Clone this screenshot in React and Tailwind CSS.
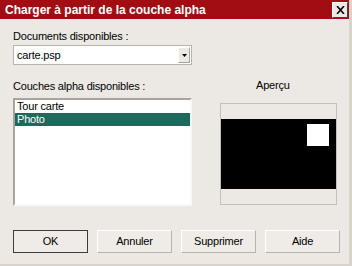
export default function App() {
    const buttons = ['OK', 'Annuler', 'Supprimer', 'Aide'];

    return (
        <div className="w-[352px] h-[266px] bg-[#ece9e4] border-r-[3px] border-b-[2px] border-[#d8d4cc] flex flex-col font-['Liberation_Sans',Arial,sans-serif] text-[11px] tracking-[-0.2px] text-black overflow-hidden">
            {/* Title bar */}
            <div className="h-[19px] shrink-0 bg-[#a10d13] flex items-center justify-between pl-[5px] pr-[1px]">
                <span className="text-white font-bold text-[12px] tracking-normal leading-none">Charger à partir de la couche alpha</span>
                <button className="w-[16px] h-[16px] bg-[#ece9e4] border border-t-white border-l-white border-r-[#404040] border-b-[#404040] flex items-center justify-center">
                    <svg width="9" height="8" viewBox="0 0 9 8">
                        <path d="M1 0 L8 8 M8 0 L1 8" stroke="black" strokeWidth="1.6" />
                    </svg>
                </button>
            </div>

            {/* Body */}
            <div className="flex pl-[13px] pt-[11px]">
                <div className="w-[179px] flex flex-col">
                    <label className="h-[13px] leading-[13px]">Documents disponibles :</label>
                    <div className="mt-[2px] h-[20px] bg-white border border-[#b8b4ac] flex items-center justify-between pl-[3px] pr-[1px]">
                        <span className="leading-none">carte.psp</span>
                        <div className="w-[12px] h-[16px] bg-[#ece9e4] border border-t-white border-l-white border-r-[#a8a49c] border-b-[#a8a49c] flex items-center justify-center">
                            <svg width="5" height="3" viewBox="0 0 5 3">
                                <path d="M0 0 H5 L2.5 3 Z" fill="black" />
                            </svg>
                        </div>
                    </div>
                    <label className="mt-[15px] h-[13px] leading-[13px]">Couches alpha disponibles :</label>
                    <div className="mt-[5px] h-[108px] bg-white border-2 border-t-[#a8a49c] border-l-[#a8a49c] border-r-[#f8f8f8] border-b-[#f8f8f8] flex flex-col">
                        <div className="h-[13px] leading-[13px] pl-[2px]">Tour carte</div>
                        <div className="h-[13px] leading-[13px] pl-[2px] bg-[#1d6a5c] text-white">Photo</div>
                    </div>
                </div>

                <div className="ml-[28px] w-[117px] flex flex-col">
                    <div className="h-[13px] leading-[13px] mt-[49px] pl-[36px]">Aperçu</div>
                    <div className="mt-[11px] h-[102px] border border-[#c4c0b8] flex flex-col justify-center">
                        <div className="h-[70px] bg-black flex justify-end items-start pt-[5px] pr-[7px]">
                            <div className="w-[22px] h-[22px] bg-white" />
                        </div>
                    </div>
                </div>
            </div>

            {/* Buttons */}
            <div className="flex gap-[9px] pl-[13px] mt-[24px]">
                {buttons.map((b, i) => (
                    <button
                        key={b}
                        className={
                            i === 0
                                ? 'w-[75px] h-[23px] bg-[#efece7] border border-[#3c3c3c] leading-none'
                                : 'w-[75px] h-[23px] bg-[#efece7] border border-t-white border-l-white border-r-[#b8b4ac] border-b-[#b8b4ac] leading-none'
                        }
                    >
                        {b}
                    </button>
                ))}
            </div>
        </div>
    );
}
